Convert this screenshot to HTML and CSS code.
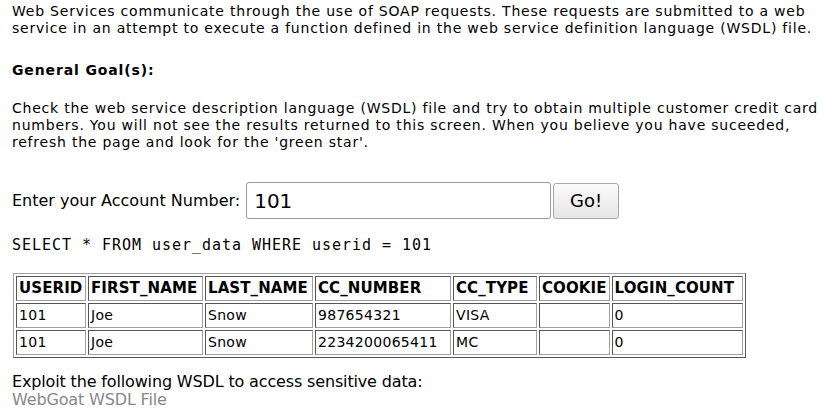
FILE: index.html
```html
<!DOCTYPE html>
<html>
<head>
<meta charset="utf-8">
<link rel="stylesheet" href="styles.css">
</head>
<body>
<div class="page">
  <p class="intro">Web Services communicate through the use of SOAP requests. These requests are submitted to a web<br>service in an attempt to execute a function defined in the web service definition language (WSDL) file.</p>
  <p class="goal-title">General Goal(s):</p>
  <p class="goal">Check the web service description language (WSDL) file and try to obtain multiple customer credit card<br>numbers. You will not see the results returned to this screen. When you believe you have suceeded,<br>refresh the page and look for the 'green star'.</p>
  <form class="account-form">
    <label class="account-label" for="account">Enter your Account Number:</label>
    <input class="account-input" id="account" type="text" value="101">
    <button class="go-button" type="button">Go!</button>
  </form>
  <p class="query">SELECT * FROM user_data WHERE userid = 101</p>
  <table class="results">
    <tr>
      <th class="col-userid">USERID</th>
      <th class="col-first">FIRST_NAME</th>
      <th class="col-last">LAST_NAME</th>
      <th class="col-ccnum">CC_NUMBER</th>
      <th class="col-cctype">CC_TYPE</th>
      <th class="col-cookie">COOKIE</th>
      <th class="col-login">LOGIN_COUNT</th>
    </tr>
    <tr><td>101</td><td>Joe</td><td>Snow</td><td>987654321</td><td>VISA</td><td></td><td>0</td></tr>
    <tr><td>101</td><td>Joe</td><td>Snow</td><td>2234200065411</td><td>MC</td><td></td><td>0</td></tr>
  </table>
  <p class="exploit">Exploit the following WSDL to access sensitive data:<br><a class="wsdl-link" href="#">WebGoat WSDL File</a></p>
</div>
</body>
</html>
```
FILE: styles.css
```css
html, body {
  margin: 0;
  padding: 0;
  background: #ffffff;
}
body {
  font-family: "DejaVu Sans", sans-serif;
  font-size: 14px;
  line-height: 17px;
  color: #000000;
}
.page {
  padding: 3px 12px 0 12px;
}
p {
  margin: 0;
}
.intro {
  letter-spacing: 0.78px;
  white-space: nowrap;
}
.goal-title {
  font-weight: bold;
  letter-spacing: 0.87px;
  margin-top: 25px;
}
.goal {
  letter-spacing: 0.78px;
  white-space: nowrap;
  margin-top: 21px;
}
.account-form {
  display: flex;
  align-items: center;
  margin-top: 31px;
}
.account-label {
  font-size: 16px;
  margin-right: 6px;
}
.account-input {
  width: 305px;
  height: 37px;
  box-sizing: border-box;
  border: 1px solid #9a9a9a;
  border-radius: 3px;
  font-family: "DejaVu Sans", sans-serif;
  font-size: 20px;
  padding: 0 7px;
  color: #000;
  margin: 0;
}
.go-button {
  width: 66px;
  height: 36px;
  margin-left: 2px;
  box-sizing: border-box;
  border: 1px solid #a8a8a8;
  border-radius: 3px;
  background: linear-gradient(#fbfbfb, #e6e6e6);
  font-family: "DejaVu Sans", sans-serif;
  font-size: 18px;
  color: #000;
  padding: 0;
}
.query {
  font-family: "DejaVu Sans Mono", monospace;
  font-size: 15px;
  letter-spacing: 0.97px;
  margin-top: 18px;
}
.results {
  margin-top: 19px;
  margin-left: 1px;
  border-collapse: separate;
  border-spacing: 2px;
  border: 1px solid;
  border-color: #a0a0a0 #555555 #555555 #a0a0a0;
}
.results th, .results td {
  box-sizing: border-box;
  border: 1px solid;
  border-color: #555555 #a0a0a0 #a0a0a0 #555555;
  padding: 3px 2px;
  text-align: left;
  font-weight: normal;
  white-space: nowrap;
}
.results td {
  letter-spacing: 0.3px;
}
.results th {
  font-size: 15px;
  font-weight: bold;
  letter-spacing: 0.1px;
}
.col-userid { width: 70px; }
.col-first { width: 115px; }
.col-last { width: 108px; }
.col-ccnum { width: 136px; }
.col-cctype { width: 84px; }
.col-cookie { width: 70px; }
.col-login { width: 131px; }
.exploit {
  font-size: 16px;
  line-height: 18px;
  letter-spacing: -0.15px;
  margin-top: 15px;
}
.wsdl-link {
  color: #888888;
  text-decoration: none;
}
```
